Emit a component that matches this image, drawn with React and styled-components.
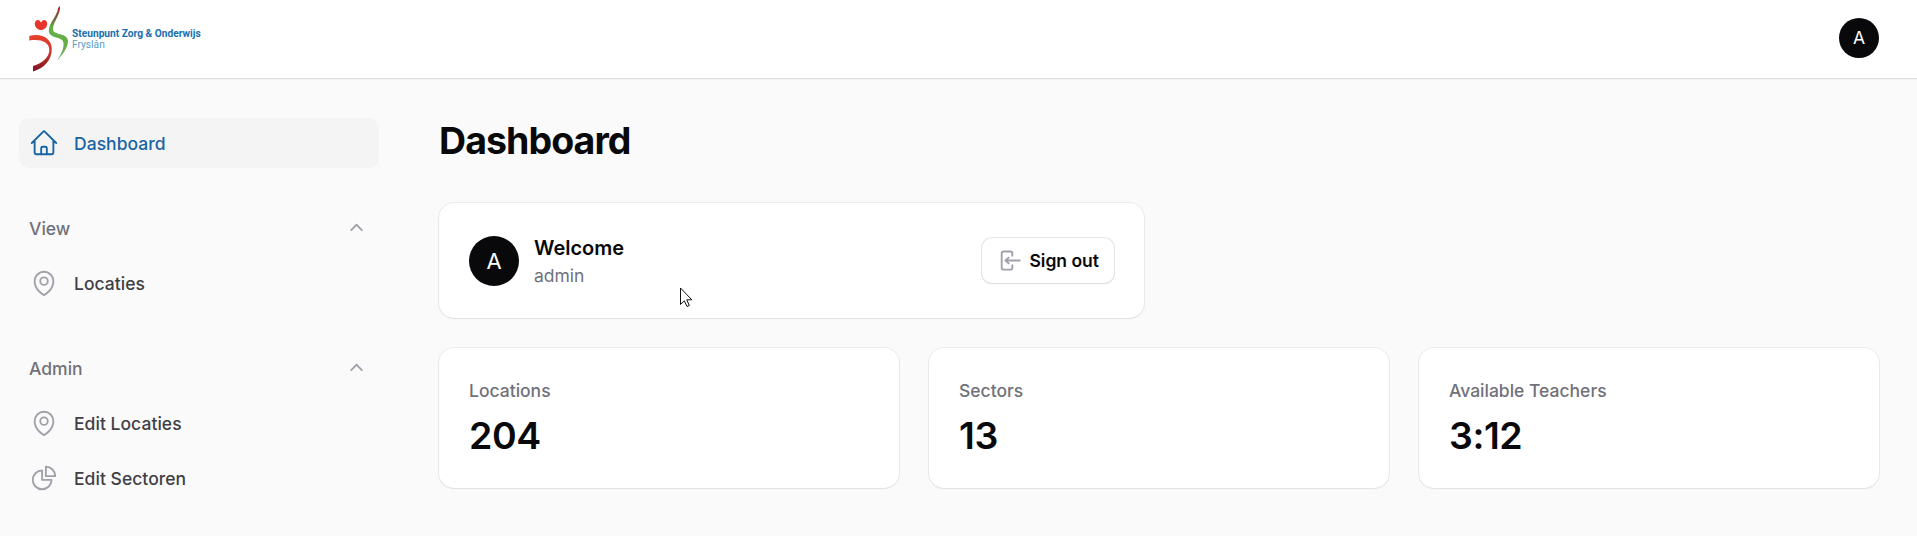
import React from 'react';
import styled, { createGlobalStyle } from 'styled-components';
import {
  HiOutlineHome,
  HiOutlineMapPin,
  HiOutlineChartPie,
  HiMiniChevronUp,
  HiMiniArrowLeftOnRectangle,
} from 'react-icons/hi2';

const GlobalStyle = createGlobalStyle`
  *, *::before, *::after { box-sizing: border-box; }
  body {
    margin: 0;
    background: #fafafa;
    color: #09090b;
    font-family: Inter, "Liberation Sans", sans-serif;
    overflow: hidden;
  }
  h1, p { margin: 0; }
  svg { display: block; flex: none; }
`;

const Page = styled.div`
  min-height: 536px;
  position: relative;
`;

const Topbar = styled.header`
  display: flex;
  align-items: center;
  justify-content: space-between;
  height: 78px;
  padding: 0 38px 2px 29px;
  background: #fff;
  box-shadow: 0 1px 0 #e2e2e4, 0 2px 1px rgba(9, 9, 11, 0.03);
`;

const Avatar = styled.div`
  display: flex;
  align-items: center;
  justify-content: center;
  flex: none;
  width: ${(p) => p.$size}px;
  height: ${(p) => p.$size}px;
  border-radius: 50%;
  background: #09090b;
  color: #fff;
  font-size: ${(p) => p.$size * 0.44}px;
  line-height: 1;
`;

const Brand = styled.div`
  display: flex;
  align-items: center;
`;

const BrandText = styled.div`
  padding-top: 1px;
  font-family: Roboto, sans-serif;
  font-size: 10.2px;
  line-height: 11px;
  color: #5a9cc6;
  white-space: nowrap;
`;

const BrandName = styled.div`
  font-weight: 700;
  color: #1a6fae;
`;

const Body = styled.div`
  display: flex;
  padding: 40px 38px 0 19px;
`;

const Sidebar = styled.nav`
  display: flex;
  flex-direction: column;
  gap: 35px;
  width: 360px;
  margin-right: 60px;
  flex: none;
`;

const Group = styled.div`
  display: flex;
  flex-direction: column;
  gap: 5px;
`;

const GroupHeader = styled.div`
  display: flex;
  align-items: center;
  justify-content: space-between;
  height: 50px;
  padding: 0 10px;
  font-size: 17.5px;
  font-weight: 500;
  color: #71717a;
  svg { color: #a1a1aa; }
`;

const Item = styled.a`
  display: flex;
  align-items: center;
  gap: 15px;
  height: 50px;
  padding: 0 10px;
  border-radius: 10px;
  font-size: 17.5px;
  font-weight: 500;
  letter-spacing: 0.002em;
  color: ${(p) => (p.$active ? '#1864a3' : '#3f3f46')};
  background: ${(p) => (p.$active ? '#f4f4f5' : 'transparent')};
  svg { color: ${(p) => (p.$active ? '#1864a3' : '#a1a1aa')}; }
`;

const Main = styled.main`
  flex: 1;
`;

const Title = styled.h1`
  font-size: 37.5px;
  line-height: 45px;
  font-weight: 700;
  letter-spacing: -0.025em;
  margin-bottom: 40px;
`;

const Card = styled.section`
  padding: 30px;
  border-radius: 15px;
  background: #fff;
  box-shadow: 0 0 0 1px rgba(9, 9, 11, 0.06), 0 1px 2px rgba(0, 0, 0, 0.05);
`;

const AccountCard = styled(Card)`
  display: flex;
  align-items: center;
  gap: 15px;
  width: 705px;
  height: 115px;
  margin-bottom: 30px;
`;

const AccountText = styled.div`
  flex: 1;
`;

const Welcome = styled.p`
  font-size: 20px;
  line-height: 30px;
  font-weight: 600;
`;

const UserName = styled.p`
  font-size: 17.5px;
  line-height: 25px;
  color: #71717a;
`;

const Button = styled.button`
  display: flex;
  align-items: center;
  gap: 7.5px;
  height: 45px;
  padding: 0 15px;
  border: 0;
  border-radius: 10px;
  background: #fff;
  box-shadow: 0 0 0 1px rgba(9, 9, 11, 0.1), 0 1px 2px rgba(0, 0, 0, 0.05);
  font: 600 17.5px Inter, sans-serif;
  color: #09090b;
  svg { color: #a1a1aa; }
`;

const Stats = styled.div`
  display: grid;
  grid-template-columns: repeat(3, 1fr);
  gap: 30px;
`;

const StatLabel = styled.p`
  font-size: 17.5px;
  line-height: 25px;
  font-weight: 500;
  color: #71717a;
  margin-bottom: 10px;
`;

const StatValue = styled.p`
  font-size: 37.5px;
  line-height: 45px;
  font-weight: 600;
  letter-spacing: -0.012em;
`;

const Pointer = styled.svg`
  position: absolute;
  left: 680px;
  top: 287px;
`;

const LogoMark = () => (
  <svg width="43" height="76" viewBox="0 0 43 76">
    <defs>
      <linearGradient id="ribbon" x1="0" y1="0" x2="0" y2="1">
        <stop offset="0" stopColor="#b3262a" />
        <stop offset="0.2" stopColor="#7d5a3a" />
        <stop offset="0.4" stopColor="#62b146" />
        <stop offset="0.8" stopColor="#6aaa4a" />
        <stop offset="1" stopColor="#8fa888" />
      </linearGradient>
      <linearGradient id="arc" x1="0" y1="0" x2="0" y2="1">
        <stop offset="0" stopColor="#e8402c" />
        <stop offset="0.45" stopColor="#cf3a2c" />
        <stop offset="1" stopColor="#7d1220" />
      </linearGradient>
    </defs>
    <path d="M5.800 24C5.600 20.800 8.500 19 10.500 20.500L12 22.500L13.600 20.500C15.600 19 18.400 20.800 18.200 24C18 27.600 15 30 12 30C9 30 6 27.600 5.800 24Z" fill="#e8352b" />
    <path d="M0.300 36C12 32.800 22.800 38 22.800 49C22.800 60 15 68.500 4 71.500V66C14 63 20.300 57 20.300 50C20.300 42 12 38.800 0.300 40.500Z" fill="url(#arc)" />
    <path d="M31 6C32 14 24 22 24 29C24 36 38.500 32 39 41C39 48 33 55 28 61C31 55 35 50 34.500 43C34 36 20 39 19.800 31C19.600 23 28.500 16 29 8Z" fill="url(#ribbon)" />
  </svg>
);

const stats = [
  ['Locations', '204'],
  ['Sectors', '13'],
  ['Available Teachers', '3:12'],
];

const groups = [
  { title: 'View', items: [['Locaties', HiOutlineMapPin]] },
  {
    title: 'Admin',
    items: [
      ['Edit Locaties', HiOutlineMapPin],
      ['Edit Sectoren', HiOutlineChartPie],
    ],
  },
];

export default function App() {
  return (
    <Page>
      <GlobalStyle />
      <Topbar>
        <Brand>
          <LogoMark />
          <BrandText>
            <BrandName>Steunpunt Zorg &amp; Onderwijs</BrandName>
            Fryslân
          </BrandText>
        </Brand>
        <Avatar $size={40}>A</Avatar>
      </Topbar>
      <Body>
        <Sidebar>
          <Item $active>
            <HiOutlineHome size={30} />
            Dashboard
          </Item>
          {groups.map((g) => (
            <Group key={g.title}>
              <GroupHeader>
                {g.title}
                <HiMiniChevronUp size={25} />
              </GroupHeader>
              {g.items.map(([label, Icon]) => (
                <Item key={label}>
                  <Icon size={30} />
                  {label}
                </Item>
              ))}
            </Group>
          ))}
        </Sidebar>
        <Main>
          <Title>Dashboard</Title>
          <AccountCard>
            <Avatar $size={50}>A</Avatar>
            <AccountText>
              <Welcome>Welcome</Welcome>
              <UserName>admin</UserName>
            </AccountText>
            <Button>
              <HiMiniArrowLeftOnRectangle size={25} />
              Sign out
            </Button>
          </AccountCard>
          <Stats>
            {stats.map(([label, value]) => (
              <Card key={label}>
                <StatLabel>{label}</StatLabel>
                <StatValue>{value}</StatValue>
              </Card>
            ))}
          </Stats>
        </Main>
      </Body>
      <Pointer width="13" height="21" viewBox="0 0 13 21">
        <path d="M0.500 1V17.500L4.300 13.800L7 19.500L9.300 18.500L6.800 12.800H11.800Z" fill="#fff" stroke="#111" strokeWidth="1" />
      </Pointer>
    </Page>
  );
}
